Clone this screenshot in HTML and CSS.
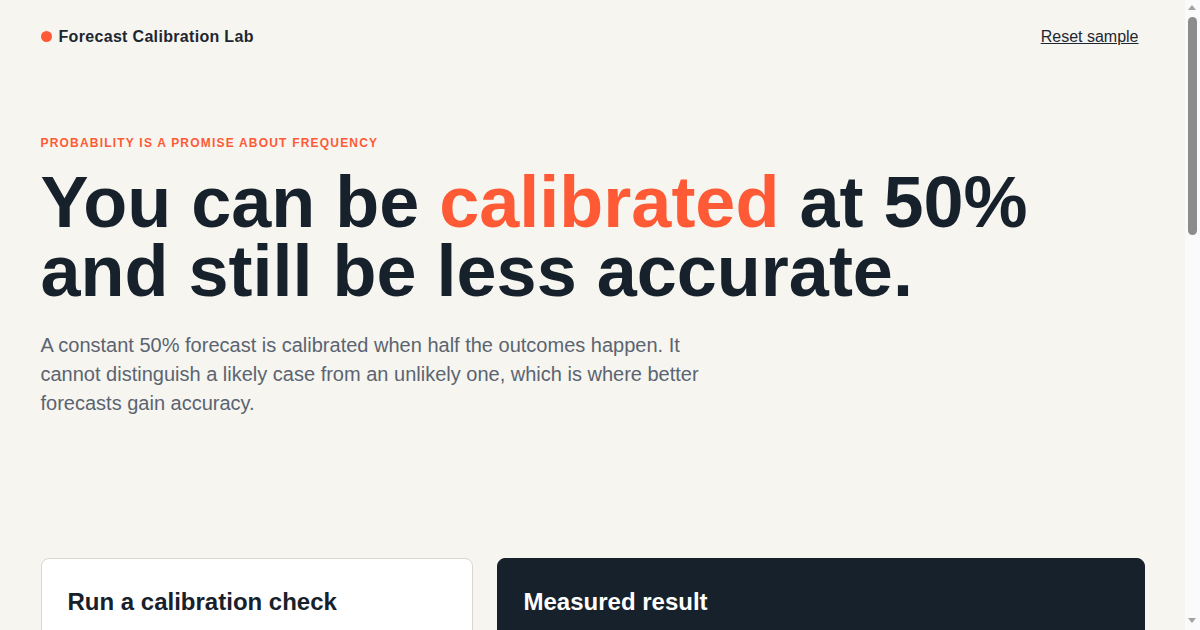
FILE: index.html
```html
<!DOCTYPE html>
<html lang="en">
<head>
<meta charset="utf-8">
<title>Forecast Calibration Lab</title>
<link rel="stylesheet" href="styles.css">
</head>
<body>
<div class="page">
  <header class="topbar">
    <div class="brand"><span class="brand-dot"></span>Forecast Calibration Lab</div>
    <a class="reset" href="#">Reset sample</a>
  </header>

  <section class="hero">
    <p class="eyebrow">Probability is a promise about frequency</p>
    <h1 class="headline">You can be <span class="accent">calibrated</span> at 50%<br>and still be less accurate.</h1>
    <p class="lede">A constant 50% forecast is calibrated when half the outcomes happen. It cannot distinguish a likely case from an unlikely one, which is where better forecasts gain accuracy.</p>
  </section>

  <section class="panels">
    <div class="card card-light">
      <h2 class="card-title">Run a calibration check</h2>
      <p class="card-text">Choose a forecaster and a sample size. We simulate outcomes and bucket the forecasts by their stated probability.</p>
      <div class="field">
        <label class="field-label">Forecaster</label>
        <div class="segmented">
          <span class="seg seg-on">Constant 50%</span>
          <span class="seg">Sharp</span>
          <span class="seg">Overconfident</span>
        </div>
      </div>
      <div class="field">
        <label class="field-label">Number of forecasts <span class="field-value">1,000</span></label>
        <div class="range"><div class="range-fill"></div><div class="range-knob"></div></div>
      </div>
      <div class="field">
        <label class="field-label">Base rate <span class="field-value">50%</span></label>
        <div class="range"><div class="range-fill half"></div><div class="range-knob half"></div></div>
      </div>
      <button class="run" type="button">Run check</button>
    </div>

    <div class="card card-dark">
      <h2 class="card-title">Measured result</h2>
      <div class="stats">
        <div class="stat"><span class="stat-label">Calibration error</span><span class="stat-value">0.01</span></div>
        <div class="stat"><span class="stat-label">Brier score</span><span class="stat-value">0.250</span></div>
        <div class="stat"><span class="stat-label">Resolution</span><span class="stat-value">0.000</span></div>
      </div>
      <svg class="chart" viewBox="0 0 560 300" aria-label="Reliability diagram">
        <rect x="40" y="10" width="500" height="250" fill="none" stroke="#2c3a47"/>
        <line x1="40" y1="260" x2="540" y2="10" stroke="#4a5a69" stroke-dasharray="6 6"/>
        <circle cx="290" cy="136" r="9" fill="#ff5a36"/>
        <text x="40" y="285" fill="#8b96a3" font-size="13" font-family="Liberation Sans, Arial, sans-serif">0%</text>
        <text x="510" y="285" fill="#8b96a3" font-size="13" font-family="Liberation Sans, Arial, sans-serif">100%</text>
      </svg>
      <p class="dark-note">Every forecast lands in one bucket, so the diagram shows a single point on the diagonal.</p>
    </div>
  </section>

  <section class="explain">
    <h2 class="explain-title">Calibration is not the whole score</h2>
    <p class="explain-text">The Brier score rewards forecasts that are both calibrated and sharp. A forecaster who says 80% on likely days and 20% on unlikely days can match the 50% forecaster on calibration while beating it on accuracy.</p>
  </section>

  <footer class="foot">Forecast Calibration Lab · sample data only</footer>
</div>

<div class="scrollbar" aria-hidden="true">
  <span class="sb-arrow sb-up"></span>
  <span class="sb-thumb"></span>
  <span class="sb-arrow sb-down"></span>
</div>
</body>
</html>
```
FILE: styles.css
```css
* { box-sizing: border-box; }
html, body { margin: 0; padding: 0; }
body {
  background: #f6f5f0;
  color: #17212b;
  font-family: "Liberation Sans", Arial, sans-serif;
  padding-right: 15px;
}
.page {
  max-width: 1104px;
  margin: 0 auto;
}
.topbar {
  display: flex;
  justify-content: space-between;
  align-items: center;
  padding: 27px 0;
  line-height: 19px;
}
.brand {
  display: flex;
  align-items: center;
  gap: 7px;
  font-size: 16px;
  font-weight: 700;
  letter-spacing: 0.02em;
  color: #1d2731;
}
.brand-dot {
  width: 11px;
  height: 11px;
  border-radius: 50%;
  background: #ff5a36;
}
.reset {
  font-size: 16px;
  color: #1d2731;
  text-decoration: underline;
  padding: 0 6px;
}
.hero {
  padding-top: 63px;
}
.eyebrow {
  margin: 0 0 17px;
  font-size: 12px;
  line-height: 15px;
  font-weight: 700;
  letter-spacing: 0.1em;
  text-transform: uppercase;
  color: #ff5a36;
}
.headline {
  margin: 0;
  font-size: 72px;
  line-height: 69px;
  font-weight: 700;
  color: #17212b;
}
.accent { color: #ff5a36; }
.lede {
  margin: 25px 0 0;
  max-width: 680px;
  font-size: 20px;
  line-height: 29px;
  color: #5b6470;
}
.panels {
  margin-top: 140px;
  display: grid;
  grid-template-columns: 2fr 3fr;
  gap: 24px;
  align-items: start;
}
.card {
  border-radius: 8px;
  padding: 29px 26px 30px;
}
.card-light {
  background: #ffffff;
  border: 1px solid #dcd7cc;
}
.card-dark {
  background: #17212b;
  border: 1px solid #17212b;
  color: #ffffff;
}
.card-title {
  margin: 0;
  font-size: 24px;
  line-height: 1.2;
  font-weight: 700;
}
.card-text {
  margin: 14px 0 24px;
  font-size: 15px;
  line-height: 1.5;
  color: #5b6470;
}
.field { margin-bottom: 24px; }
.field-label {
  display: flex;
  justify-content: space-between;
  font-size: 14px;
  font-weight: 700;
  margin-bottom: 10px;
}
.field-value { color: #ff5a36; }
.segmented {
  display: flex;
  border: 1px solid #dcd7cc;
  border-radius: 6px;
  overflow: hidden;
}
.seg {
  flex: 1;
  text-align: center;
  padding: 9px 4px;
  font-size: 13px;
  color: #5b6470;
}
.seg-on { background: #17212b; color: #ffffff; }
.range {
  position: relative;
  height: 6px;
  border-radius: 3px;
  background: #e6e2d8;
}
.range-fill {
  height: 6px;
  width: 70%;
  border-radius: 3px;
  background: #ff5a36;
}
.range-fill.half { width: 50%; }
.range-knob {
  position: absolute;
  top: -6px;
  left: calc(70% - 9px);
  width: 18px;
  height: 18px;
  border-radius: 50%;
  background: #ffffff;
  border: 2px solid #ff5a36;
}
.range-knob.half { left: calc(50% - 9px); }
.run {
  margin-top: 8px;
  width: 100%;
  padding: 14px;
  border: 0;
  border-radius: 6px;
  background: #ff5a36;
  color: #ffffff;
  font: 700 16px "Liberation Sans", Arial, sans-serif;
}
.stats {
  display: grid;
  grid-template-columns: repeat(3, 1fr);
  gap: 16px;
  margin: 24px 0;
}
.stat {
  display: flex;
  flex-direction: column;
  gap: 6px;
  padding: 14px;
  border: 1px solid #2c3a47;
  border-radius: 6px;
}
.stat-label { font-size: 13px; color: #8b96a3; }
.stat-value { font-size: 28px; font-weight: 700; }
.chart { display: block; width: 100%; height: auto; }
.dark-note {
  margin: 16px 0 0;
  font-size: 15px;
  line-height: 1.5;
  color: #b6bfc9;
}
.explain {
  margin-top: 120px;
  max-width: 680px;
}
.explain-title {
  margin: 0 0 14px;
  font-size: 32px;
  line-height: 1.2;
}
.explain-text {
  margin: 0;
  font-size: 18px;
  line-height: 1.6;
  color: #5b6470;
}
.foot {
  margin-top: 100px;
  padding: 28px 0 40px;
  border-top: 1px solid #dcd7cc;
  font-size: 14px;
  color: #5b6470;
}

/* painted scrollbar overlay, matching the reference browser chrome */
.scrollbar {
  position: fixed;
  top: 0;
  right: 0;
  width: 15px;
  height: 100vh;
  background: #fafafa;
}
.sb-thumb {
  position: absolute;
  top: 17px;
  left: 3px;
  width: 9px;
  height: 218px;
  border-radius: 5px;
  background: #8c8c8c;
}
.sb-arrow {
  position: absolute;
  left: 3px;
  width: 0;
  height: 0;
  border-left: 4.5px solid transparent;
  border-right: 4.5px solid transparent;
}
.sb-up {
  top: 5px;
  border-bottom: 5px solid #a3a3a3;
}
.sb-down {
  bottom: 7px;
  border-top: 5px solid #a3a3a3;
}
```
